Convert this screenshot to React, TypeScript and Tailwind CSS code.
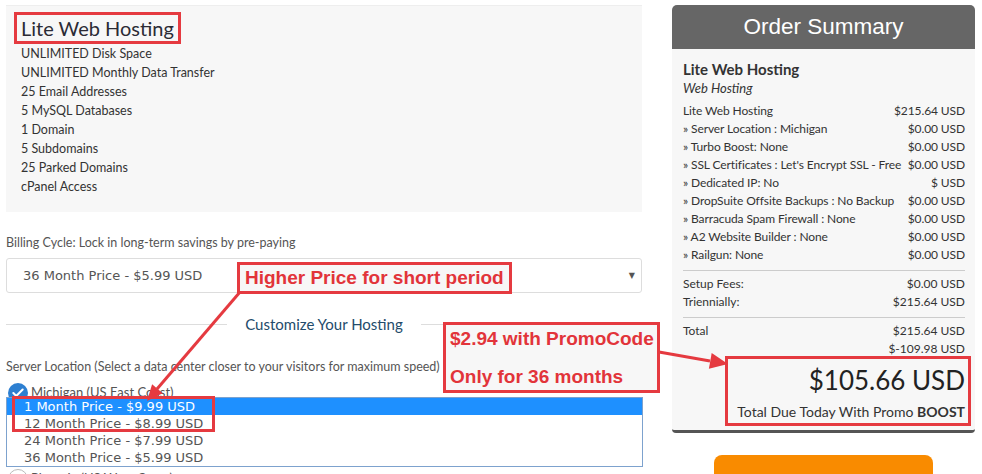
import { Check } from "lucide-react";

const FEATURES = [
  "UNLIMITED Disk Space",
  "UNLIMITED Monthly Data Transfer",
  "25 Email Addresses",
  "5 MySQL Databases",
  "1 Domain",
  "5 Subdomains",
  "25 Parked Domains",
  "cPanel Access",
];

const ITEMS: [string, string][] = [
  ["Lite Web Hosting", "$215.64 USD"],
  ["» Server Location : Michigan", "$0.00 USD"],
  ["» Turbo Boost: None", "$0.00 USD"],
  ["» SSL Certificates : Let's Encrypt SSL - Free", "$0.00 USD"],
  ["» Dedicated IP: No", "$ USD"],
  ["» DropSuite Offsite Backups : No Backup", "$0.00 USD"],
  ["» Barracuda Spam Firewall : None", "$0.00 USD"],
  ["» A2 Website Builder : None", "$0.00 USD"],
  ["» Railgun: None", "$0.00 USD"],
];

const CYCLES = [
  "1 Month Price - $9.99 USD",
  "12 Month Price - $8.99 USD",
  "24 Month Price - $7.99 USD",
  "36 Month Price - $5.99 USD",
];

function Row({ label, value }: { label: string; value: string }) {
  return (
    <div className="flex justify-between gap-[3px] leading-[18px] whitespace-nowrap">
      <span>{label}</span>
      <span>{value}</span>
    </div>
  );
}

export default function App() {
  return (
    <div className="relative w-[982px] h-[474px] overflow-hidden bg-white font-['Lato',sans-serif] text-[#333]">
      <div className="flex">
        {/* left column */}
        <div className="ml-[6px] mt-[5px] w-[636px] flex flex-col">
          <div className="bg-[#f7f7f7] h-[207px] pl-[15px] pt-[8px] border-t border-[#eee]">
            <div className="relative inline-block text-[20px] leading-[28px] text-[#2b2b35]">
              Lite Web Hosting
              <span className="absolute -left-[7px] -right-[7px] -top-[2px] -bottom-[2px] border-[3px] border-[#e53a40]" />
            </div>
            <div className="mt-[2px] text-[12.5px] leading-[19px]">
              {FEATURES.map((f) => (
                <div key={f}>{f}</div>
              ))}
            </div>
          </div>

          <div className="mt-[23px] text-[12.5px] leading-[16px] text-[#555]">
            Billing Cycle: Lock in long-term savings by pre-paying
          </div>
          <div className="mt-[7px] h-[35px] border border-[#ddd] rounded-[3px] bg-white flex items-center justify-between pl-[16px] pr-[6px] font-['DejaVu_Sans',sans-serif] text-[13px] text-[#555]">
            <span>36 Month Price - $5.99 USD</span>
            <span className="text-[8px] text-[#555]">▼</span>
          </div>

          <div className="mt-[21px] h-[20px] flex items-center">
            <div className="flex-1 border-t border-[#ddd]" />
            <span className="mx-[18px] text-[15px] text-[#234b6b]">Customize Your Hosting</span>
            <div className="flex-1 border-t border-[#ddd]" />
          </div>

          <div className="mt-[25px] text-[12.5px] leading-[16px] text-[#555]">
            Server Location (Select a data center closer to your visitors for maximum speed)
          </div>
          <div className="mt-[8px] ml-[2px] flex items-center gap-[3px] h-[20px]">
            <span className="w-[20px] h-[20px] rounded-full bg-[#2d7fd1] flex items-center justify-center">
              <Check className="w-[14px] h-[14px] text-white" strokeWidth={3.5} />
            </span>
            <span className="text-[13px] text-[#555]">Michigan (US East Coast)</span>
          </div>
          <div className="mt-[66px] ml-[2px] flex items-center gap-[3px] h-[20px]">
            <span className="w-[20px] h-[20px] rounded-full border border-[#bbb] bg-white" />
            <span className="text-[13px] text-[#555]">Phoenix (US West Coast)</span>
          </div>
        </div>

        {/* order summary */}
        <div className="ml-[30px] mt-[5px] w-[303px] flex flex-col">
          <div className="h-[44px] bg-[#666] rounded-t-[5px] flex items-center justify-center text-white text-[22.5px] font-['Liberation_Sans',sans-serif]">
            Order Summary
          </div>
          <div className="bg-[#f7f7f7] pl-[11px] pr-[10px] pt-[10px] pb-[8px] border-b-[3px] border-[#555] rounded-b-[4px] text-[12px]">
            <div className="font-bold text-[15px] leading-[20px]">Lite Web Hosting</div>
            <div className="italic text-[13px] leading-[18px]">Web Hosting</div>
            <div className="mt-[5px] tracking-[-0.1px]">
              {ITEMS.map(([l, v]) => (
                <Row key={l} label={l} value={v} />
              ))}
            </div>
            <div className="mt-[6px] border-t border-[#ccc]" />
            <div className="mt-[4px]">
              <Row label="Setup Fees:" value="$0.00 USD" />
              <Row label="Triennially:" value="$215.64 USD" />
            </div>
            <div className="mt-[6px] border-t border-[#ccc]" />
            <div className="mt-[4px]">
              <Row label="Total" value="$215.64 USD" />
              <Row label="" value="$-109.98 USD" />
            </div>
            <div className="mt-[6px] text-right text-[26px] leading-[32px] text-[#222]">$105.66 USD</div>
            <div className="mt-[6px] text-right text-[14px] leading-[20px] whitespace-nowrap">
              Total Due Today With Promo <b>BOOST</b>
            </div>
          </div>
          <div className="mt-[22px] ml-[42px] w-[219px] h-[40px] rounded-[8px] bg-[#f98b00]" />
        </div>
      </div>

      {/* open billing cycle listbox */}
      <div className="absolute left-[6px] top-[397px] w-[637px] h-[70px] border border-[#7da2ce] bg-white font-['DejaVu_Sans',sans-serif] text-[13px]">
        {CYCLES.map((c, i) => (
          <div
            key={c}
            className={
              i === 0
                ? "h-[17px] leading-[17px] pl-[17px] bg-[#1e90ff] text-white"
                : "h-[17px] leading-[17px] pl-[17px] text-[#555]"
            }
          >
            {c}
          </div>
        ))}
      </div>

      {/* annotations */}
      <div className="absolute left-[12px] top-[396px] w-[203px] h-[36px] border-[3px] border-[#e53a40]" />
      <div className="absolute left-[237px] top-[262px] w-[275px] h-[32px] border-[3px] border-[#e53a40] bg-[#f7f7f7] flex items-center pl-[5px] font-['Liberation_Sans',sans-serif] font-bold text-[19px] text-[#e2343a]">
        Higher Price for short period
      </div>
      <div className="absolute left-[443px] top-[322px] w-[217px] h-[71px] border-[3px] border-[#e53a40] bg-[#f7f7f7] pl-[4px] font-['Liberation_Sans',sans-serif] font-bold text-[19px] text-[#e2343a]">
        <div className="mt-[2px] leading-[24px]">$2.94 with PromoCode</div>
        <div className="mt-[14px] leading-[24px]">Only for 36 months</div>
      </div>
      <div className="absolute left-[725px] top-[356px] w-[246px] h-[70px] border-[3px] border-[#e53a40]" />

      <svg className="absolute inset-0 pointer-events-none" width="982" height="474">
        <line x1="240" y1="292" x2="157" y2="389" stroke="#e53a40" strokeWidth="3" />
        <polygon points="147,401 162.7,393.3 152.1,384.3" fill="#e53a40" />
        <line x1="659" y1="352" x2="710" y2="361" stroke="#e53a40" strokeWidth="3" />
        <polygon points="728,364 708.9,368.8 711.7,353" fill="#e53a40" />
      </svg>
    </div>
  );
}
